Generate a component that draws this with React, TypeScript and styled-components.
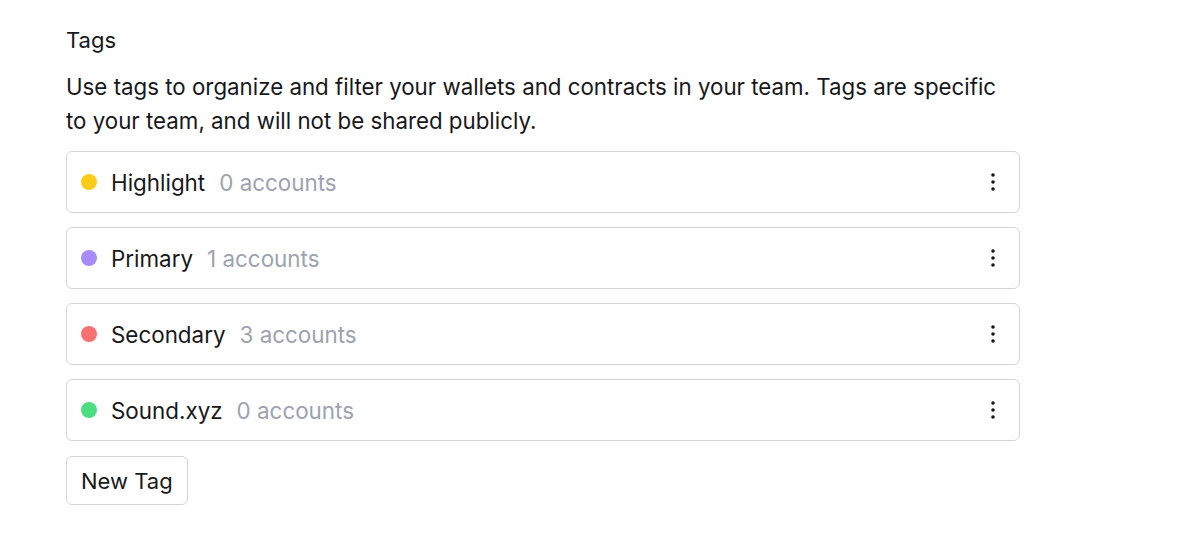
import React from "react";
import styled, { createGlobalStyle } from "styled-components";

const Global = createGlobalStyle`
  html, body { margin: 0; padding: 0; background: #ffffff; }
  body { font-family: Inter, "Noto Sans", sans-serif; color: #18181b; -webkit-font-smoothing: antialiased; }
`;

const Page = styled.div`
  padding: 26px 0 0 66px;
`;

const Section = styled.section`
  width: 954px;
  display: flex;
  flex-direction: column;
`;

const Title = styled.h2`
  margin: 0;
  font-size: 22px;
  line-height: 28px;
  font-weight: 400;
`;

const Description = styled.p`
  margin: 16px 0 0;
  max-width: 940px;
  font-size: 22.3px;
  line-height: 34px;
  color: #18181b;
`;

const List = styled.div`
  margin-top: 13px;
  display: flex;
  flex-direction: column;
  gap: 14px;
`;

const Row = styled.div`
  box-sizing: border-box;
  height: 62px;
  border: 1px solid #d4d4d8;
  border-radius: 6px;
  display: flex;
  align-items: center;
  padding: 0 16px 0 14px;
  gap: 14px;
`;

const Dot = styled.span<{ $color: string }>`
  width: 16px;
  height: 16px;
  border-radius: 50%;
  background: ${(p) => p.$color};
  flex: none;
`;

const Name = styled.span`
  font-size: 22.4px;
  color: #18181b;
`;

const Count = styled.span`
  font-size: 22.4px;
  color: #9ca3af;
`;

const Spacer = styled.div`
  flex: 1;
`;

const MenuButton = styled.button`
  border: none;
  background: none;
  padding: 0;
  width: 20px;
  height: 28px;
  display: flex;
  align-items: center;
  justify-content: center;
  color: #18181b;
  cursor: pointer;
`;

const NewTagButton = styled.button`
  margin-top: 15px;
  align-self: flex-start;
  box-sizing: border-box;
  height: 49px;
  padding: 0 14px;
  border: 1px solid #d4d4d8;
  border-radius: 6px;
  background: #ffffff;
  font-family: inherit;
  font-size: 22px;
  color: #18181b;
`;

const Kebab = () => (
  <svg width="6" height="20" viewBox="0 0 6 20" fill="currentColor">
    <circle cx="3" cy="3" r="1.8" />
    <circle cx="3" cy="10" r="1.8" />
    <circle cx="3" cy="17" r="1.8" />
  </svg>
);

const tags = [
  { name: "Highlight", count: 0, color: "#facc15" },
  { name: "Primary", count: 1, color: "#a78bfa" },
  { name: "Secondary", count: 3, color: "#f87171" },
  { name: "Sound.xyz", count: 0, color: "#4ade80" },
];

export default function App() {
  return (
    <Page>
      <Global />
      <Section>
        <Title>Tags</Title>
        <Description>
          Use tags to organize and filter your wallets and contracts in your team. Tags are specific
          to your team, and will not be shared publicly.
        </Description>
        <List>
          {tags.map((t) => (
            <Row key={t.name}>
              <Dot $color={t.color} />
              <Name>{t.name}</Name>
              <Count>{t.count} accounts</Count>
              <Spacer />
              <MenuButton aria-label="More">
                <Kebab />
              </MenuButton>
            </Row>
          ))}
        </List>
        <NewTagButton>New Tag</NewTagButton>
      </Section>
    </Page>
  );
}
